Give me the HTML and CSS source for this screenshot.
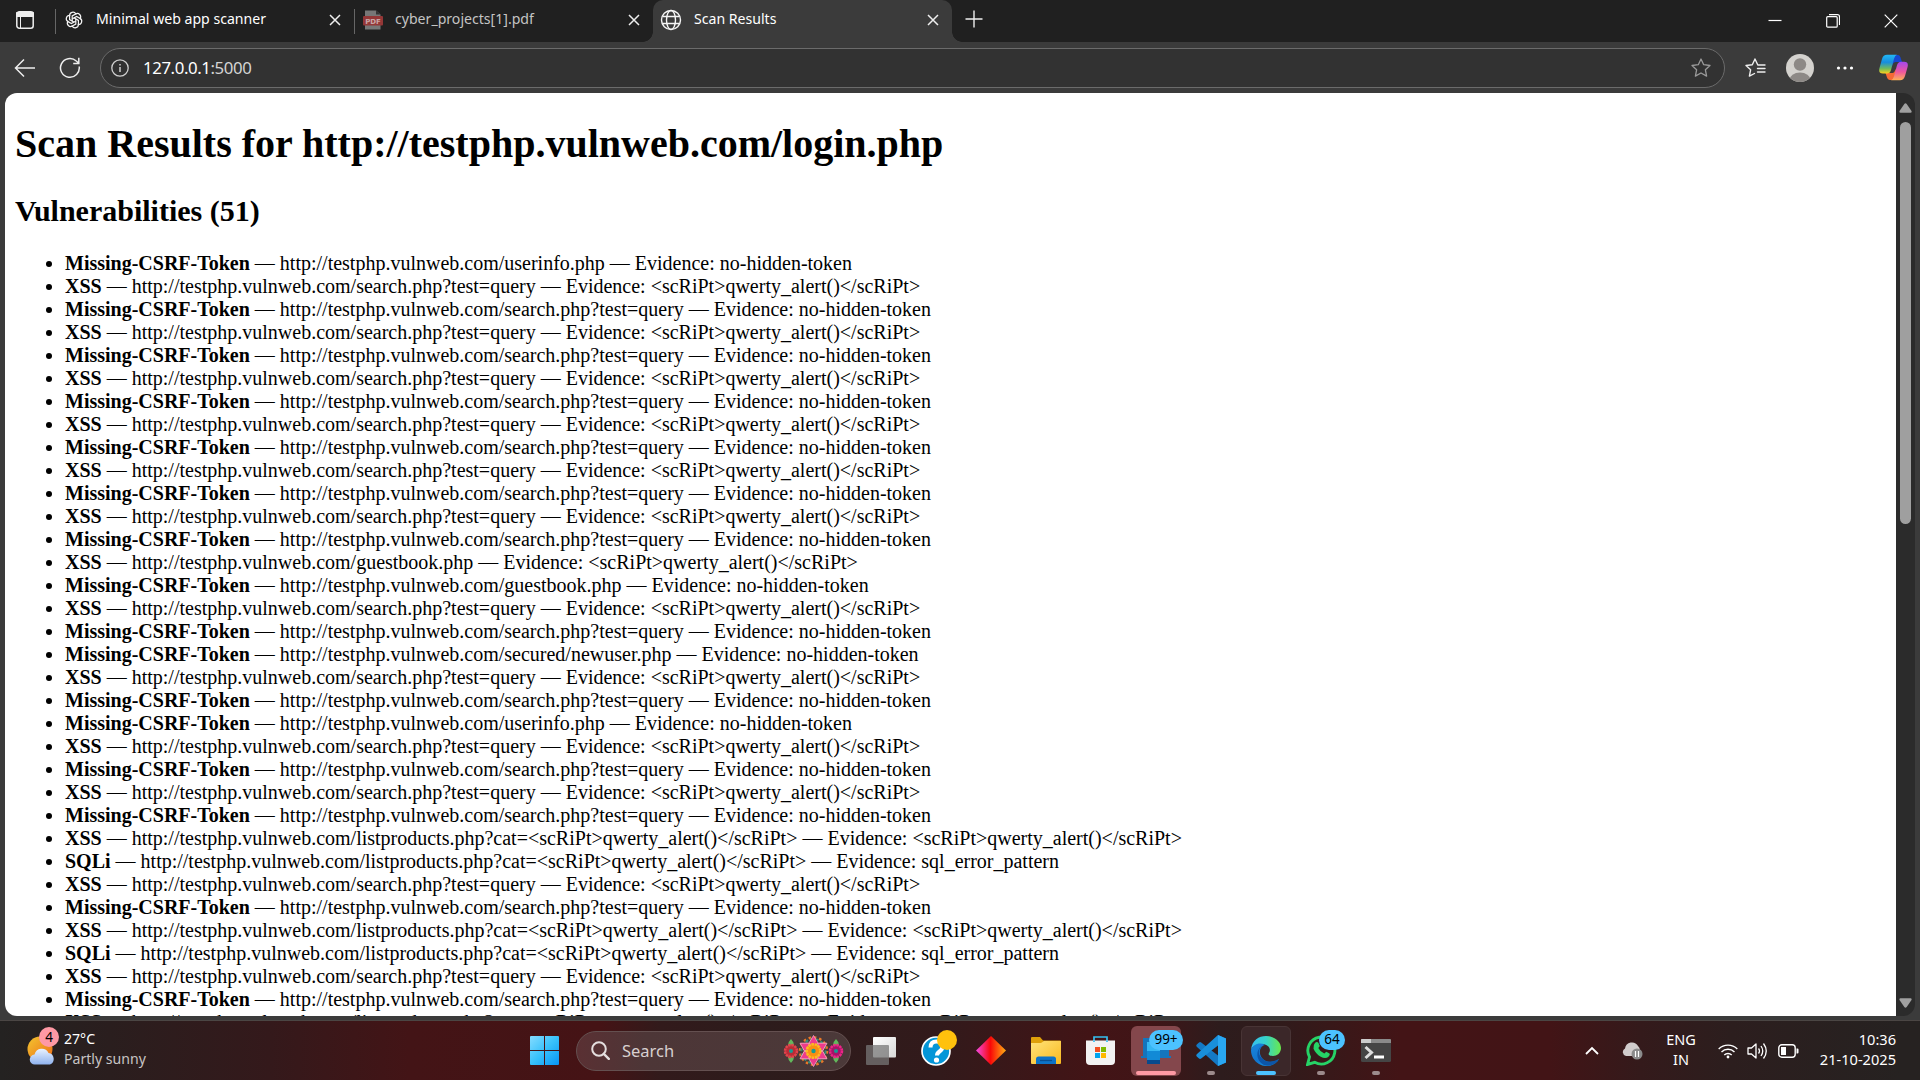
FILE: index.html
```html
<!DOCTYPE html>
<html lang="en">
<head>
<meta charset="utf-8">
<title>Scan Results</title>
<link rel="stylesheet" href="styles.css">
</head>
<body>
<div class="browser">
  <header class="tabstrip">
    <div class="tab-actions"><svg width="20" height="20" viewBox="0 0 20 20"><rect x="1.8" y="1.8" width="16.4" height="16.4" rx="2.5" fill="none" stroke="#eee" stroke-width="1.5"/><path d="M1.5 2.5h17v4h-17zM5.5 6v12" fill="#eee" stroke="#eee"/></svg></div>
    <div class="tab tab-chat">
      <svg class="favicon" width="18" height="18" viewBox="0 0 20 20" fill="none" stroke="#f3f3f3" stroke-width="1.35"><g id="knot"><path id="k" d="M8 11.4V5.5l3.8-2.2a3.7 3.7 0 0 1 5.1 5l-.4.7"/><use href="#k" transform="rotate(60 10 10)"/><use href="#k" transform="rotate(120 10 10)"/><use href="#k" transform="rotate(180 10 10)"/><use href="#k" transform="rotate(240 10 10)"/><use href="#k" transform="rotate(300 10 10)"/></g></svg>
      <span class="tab-title t1">Minimal web app scanner</span>
      <svg class="close" width="12" height="12" viewBox="0 0 12 12"><path d="M1 1l10 10M11 1L1 11"/></svg>
    </div>
    <div class="tab tab-pdf">
      <svg class="favicon" width="20" height="20" viewBox="0 0 20 20"><path d="M2 .5h11l4.500 4v15H2z" fill="#777"/><path d="M13 .5v4h4.500" fill="#333"/><rect y="6" width="20" height="9.500" rx="1" fill="#943737"/><text x="10" y="13.500" class="pdf-label">PDF</text></svg>
      <span class="tab-title t2">cyber_projects[1].pdf</span>
      <svg class="close" width="12" height="12" viewBox="0 0 12 12"><path d="M1 1l10 10M11 1L1 11"/></svg>
    </div>
    <div class="tab tab-active">
      <svg class="favicon" width="22" height="22" viewBox="0 0 22 22" fill="none" stroke="#f5f5f5" stroke-width="1.4"><circle cx="11" cy="11" r="9.500"/><ellipse cx="11" cy="11" rx="4.500" ry="9.500"/><path d="M2.500 7.500h17M2.500 14.500h17"/></svg>
      <span class="tab-title t3">Scan Results</span>
      <svg class="close" width="12" height="12" viewBox="0 0 12 12"><path d="M1 1l10 10M11 1L1 11"/></svg>
    </div>
    <svg class="new-tab" width="18" height="18" viewBox="0 0 18 18"><path d="M9 .5v17M.5 9h17" stroke="#eee" stroke-width="1.400"/></svg>
    <div class="window-controls">
      <svg width="14" height="14" viewBox="0 0 14 14"><path d="M.5 6.500h13"/></svg>
      <svg width="14" height="14" viewBox="0 0 14 14"><rect x=".7" y="2.700" width="10.500" height="10.500" rx="1"/><path d="M3 .7h8.500a2 2 0 0 1 2 2V11"/></svg>
      <svg width="14" height="14" viewBox="0 0 14 14"><path d="M.7.7l12.600 12.600M13.300.7L.7 13.300"/></svg>
    </div>
  </header>
  <nav class="toolbar">
    <svg class="back" width="22" height="22" viewBox="0 0 22 22"><path d="M10 2.500L1.500 11l8.500 8.500M1.500 11h19.500"/></svg>
    <svg class="reload" width="22" height="22" viewBox="0 0 22 22"><path d="M20.200 9.500A9.400 9.400 0 1 1 17.300 4L19.800 6.200M19.800.8v5.600h-5.600"/></svg>
    <div class="address">
      <svg width="18" height="18" viewBox="0 0 18 18" fill="none" stroke="#d0d0d0" stroke-width="1.300"><circle cx="9" cy="9" r="8.200"/><path d="M9 8v5M9 5v1.500" stroke-width="1.500"/></svg>
      <span class="url">127.0.0.1<span class="port">:5000</span></span>
      <svg class="fav" width="20" height="20" viewBox="0 0 20 20" fill="none" stroke="#9a9a9a" stroke-width="1.300" stroke-linejoin="round"><path d="M10 1l2.700 5.700 6.300.8-4.600 4.300 1.200 6.300L10 15l-5.600 3.100 1.200-6.300L1 7.500l6.300-.8z"/></svg>
    </div>
    <svg class="favorites" width="21" height="20" viewBox="0 0 21 20" fill="none" stroke="#eee" stroke-width="1.400" stroke-linejoin="round" stroke-linecap="round"><path d="M20 7h-7.200L10 1 7.300 6.700 1 7.500l4.600 4.300-1.200 6.300L9.500 15.500M12.500 10.500H20M12.500 14H20"/></svg>
    <svg class="avatar" width="28" height="28" viewBox="0 0 28 28"><clipPath id="av"><circle cx="14" cy="14" r="14"/></clipPath><g clip-path="url(#av)"><path fill="#d4d2ce" d="M0 0h28v28H0z"/><circle cx="14" cy="10.500" r="6.200" fill="#8d8986"/><ellipse cx="14" cy="26" rx="10.500" ry="7.500" fill="#8d8986"/></g></svg>
    <svg class="more" width="18" height="4" viewBox="0 0 18 4" fill="#fff"><circle cx="2.500" cy="2" r="1.600"/><circle cx="9" cy="2" r="1.600"/><circle cx="15.500" cy="2" r="1.600"/></svg>
    <svg class="copilot" width="29" height="27" viewBox="0 0 29 27">
      <defs><linearGradient id="c1" x2="0" y2="1"><stop stop-color="#22b8f5"/><stop offset=".4" stop-color="#178ddf"/><stop offset=".75" stop-color="#74bd58"/><stop offset="1" stop-color="#ffd11b"/></linearGradient><linearGradient id="c2" x2="0" y2="1"><stop stop-color="#a348ed"/><stop offset=".55" stop-color="#ee569e"/><stop offset="1" stop-color="#ffb157"/></linearGradient></defs>
      <path d="M14 1h5q2 0 3 4l1 3h-6q-3 0-4 4l-2-8z" fill="#1747cf"/><path d="M15 26h-4q-2.500 0-3.500-4l-1-3h7q2 0 3-4l2 8z" fill="#f66a35"/>
      <path d="M8 .8h10q-2 .5-3 4L12 16q-1 3.500-4 3.500H4Q-1 19.500.5 14L3 5Q4.200.8 8 .8z" fill="url(#c1)"/><path d="M21 26.200H12q2-.5 3-4l3-11q1-3.500 4-3.500h3q5 0 3.500 5.500L26 22q-1.200 4.200-5 4.200z" fill="url(#c2)"/>
    </svg>
  </nav>
  <div class="viewport">
    <main class="page">
      <h1>Scan Results for http://testphp.vulnweb.com/login.php</h1>
      <h2>Vulnerabilities (51)</h2>
      <ul>
        <li><b>Missing-CSRF-Token</b> — http://testphp.vulnweb.com/userinfo.php — Evidence: no-hidden-token</li>
        <li><b>XSS</b> — http://testphp.vulnweb.com/search.php?test=query — Evidence: &lt;scRiPt&gt;qwerty_alert()&lt;/scRiPt&gt;</li>
        <li><b>Missing-CSRF-Token</b> — http://testphp.vulnweb.com/search.php?test=query — Evidence: no-hidden-token</li>
        <li><b>XSS</b> — http://testphp.vulnweb.com/search.php?test=query — Evidence: &lt;scRiPt&gt;qwerty_alert()&lt;/scRiPt&gt;</li>
        <li><b>Missing-CSRF-Token</b> — http://testphp.vulnweb.com/search.php?test=query — Evidence: no-hidden-token</li>
        <li><b>XSS</b> — http://testphp.vulnweb.com/search.php?test=query — Evidence: &lt;scRiPt&gt;qwerty_alert()&lt;/scRiPt&gt;</li>
        <li><b>Missing-CSRF-Token</b> — http://testphp.vulnweb.com/search.php?test=query — Evidence: no-hidden-token</li>
        <li><b>XSS</b> — http://testphp.vulnweb.com/search.php?test=query — Evidence: &lt;scRiPt&gt;qwerty_alert()&lt;/scRiPt&gt;</li>
        <li><b>Missing-CSRF-Token</b> — http://testphp.vulnweb.com/search.php?test=query — Evidence: no-hidden-token</li>
        <li><b>XSS</b> — http://testphp.vulnweb.com/search.php?test=query — Evidence: &lt;scRiPt&gt;qwerty_alert()&lt;/scRiPt&gt;</li>
        <li><b>Missing-CSRF-Token</b> — http://testphp.vulnweb.com/search.php?test=query — Evidence: no-hidden-token</li>
        <li><b>XSS</b> — http://testphp.vulnweb.com/search.php?test=query — Evidence: &lt;scRiPt&gt;qwerty_alert()&lt;/scRiPt&gt;</li>
        <li><b>Missing-CSRF-Token</b> — http://testphp.vulnweb.com/search.php?test=query — Evidence: no-hidden-token</li>
        <li><b>XSS</b> — http://testphp.vulnweb.com/guestbook.php — Evidence: &lt;scRiPt&gt;qwerty_alert()&lt;/scRiPt&gt;</li>
        <li><b>Missing-CSRF-Token</b> — http://testphp.vulnweb.com/guestbook.php — Evidence: no-hidden-token</li>
        <li><b>XSS</b> — http://testphp.vulnweb.com/search.php?test=query — Evidence: &lt;scRiPt&gt;qwerty_alert()&lt;/scRiPt&gt;</li>
        <li><b>Missing-CSRF-Token</b> — http://testphp.vulnweb.com/search.php?test=query — Evidence: no-hidden-token</li>
        <li><b>Missing-CSRF-Token</b> — http://testphp.vulnweb.com/secured/newuser.php — Evidence: no-hidden-token</li>
        <li><b>XSS</b> — http://testphp.vulnweb.com/search.php?test=query — Evidence: &lt;scRiPt&gt;qwerty_alert()&lt;/scRiPt&gt;</li>
        <li><b>Missing-CSRF-Token</b> — http://testphp.vulnweb.com/search.php?test=query — Evidence: no-hidden-token</li>
        <li><b>Missing-CSRF-Token</b> — http://testphp.vulnweb.com/userinfo.php — Evidence: no-hidden-token</li>
        <li><b>XSS</b> — http://testphp.vulnweb.com/search.php?test=query — Evidence: &lt;scRiPt&gt;qwerty_alert()&lt;/scRiPt&gt;</li>
        <li><b>Missing-CSRF-Token</b> — http://testphp.vulnweb.com/search.php?test=query — Evidence: no-hidden-token</li>
        <li><b>XSS</b> — http://testphp.vulnweb.com/search.php?test=query — Evidence: &lt;scRiPt&gt;qwerty_alert()&lt;/scRiPt&gt;</li>
        <li><b>Missing-CSRF-Token</b> — http://testphp.vulnweb.com/search.php?test=query — Evidence: no-hidden-token</li>
        <li><b>XSS</b> — http://testphp.vulnweb.com/listproducts.php?cat=&lt;scRiPt&gt;qwerty_alert()&lt;/scRiPt&gt; — Evidence: &lt;scRiPt&gt;qwerty_alert()&lt;/scRiPt&gt;</li>
        <li><b>SQLi</b> — http://testphp.vulnweb.com/listproducts.php?cat=&lt;scRiPt&gt;qwerty_alert()&lt;/scRiPt&gt; — Evidence: sql_error_pattern</li>
        <li><b>XSS</b> — http://testphp.vulnweb.com/search.php?test=query — Evidence: &lt;scRiPt&gt;qwerty_alert()&lt;/scRiPt&gt;</li>
        <li><b>Missing-CSRF-Token</b> — http://testphp.vulnweb.com/search.php?test=query — Evidence: no-hidden-token</li>
        <li><b>XSS</b> — http://testphp.vulnweb.com/listproducts.php?cat=&lt;scRiPt&gt;qwerty_alert()&lt;/scRiPt&gt; — Evidence: &lt;scRiPt&gt;qwerty_alert()&lt;/scRiPt&gt;</li>
        <li><b>SQLi</b> — http://testphp.vulnweb.com/listproducts.php?cat=&lt;scRiPt&gt;qwerty_alert()&lt;/scRiPt&gt; — Evidence: sql_error_pattern</li>
        <li><b>XSS</b> — http://testphp.vulnweb.com/search.php?test=query — Evidence: &lt;scRiPt&gt;qwerty_alert()&lt;/scRiPt&gt;</li>
        <li><b>Missing-CSRF-Token</b> — http://testphp.vulnweb.com/search.php?test=query — Evidence: no-hidden-token</li>
        <li><b>XSS</b> — http://testphp.vulnweb.com/listproducts.php?cat=&lt;scRiPt&gt;qwerty_alert()&lt;/scRiPt&gt; — Evidence: &lt;scRiPt&gt;qwerty_alert()&lt;/scRiPt&gt;</li>
      </ul>
    </main>
    <div class="scrollbar">
      <svg width="13" height="10" viewBox="0 0 13 10"><path d="M5.300 1q1.200-1.500 2.400 0l4.800 7q.5 1.700-1 1.700H1.500Q0 9.700.5 8z" fill="#a0a0a0"/></svg>
      <div class="track"><div class="thumb"></div></div>
      <svg width="13" height="10" viewBox="0 0 13 10"><path d="M5.300 9q1.200 1.500 2.400 0l4.800-7q.5-1.700-1-1.700H1.500Q0 .3.500 2z" fill="#a0a0a0"/></svg>
    </div>
  </div>
</div>
<footer class="taskbar">
  <div class="weather">
    <div class="weather-icon">
      <svg width="29" height="29" viewBox="0 0 29 29"><defs><linearGradient id="sun" x2="1" y2="1"><stop stop-color="#f3c52f"/><stop offset="1" stop-color="#ed6b18"/></linearGradient><linearGradient id="cl" x2="0" y2="1"><stop stop-color="#e9f2ff"/><stop offset="1" stop-color="#8fb2ee"/></linearGradient></defs><circle cx="13" cy="13" r="12.500" fill="url(#sun)"/><path d="M8 28.500a5 5 0 0 1-.5-10 7.500 7.500 0 0 1 14-1.500 6 6 0 0 1 1.500 11.500z" fill="url(#cl)"/></svg>
      <span class="weather-badge">4</span>
    </div>
    <div class="weather-text"><span>27°C</span><span class="cond">Partly sunny</span></div>
  </div>
  <svg class="start" width="29" height="29" viewBox="0 0 29 29"><defs><linearGradient id="win" gradientUnits="userSpaceOnUse" x2="29" y2="29"><stop stop-color="#85dcff"/><stop offset=".5" stop-color="#38c1fb"/><stop offset="1" stop-color="#0795f5"/></linearGradient></defs><path d="M0 1q0-1 1-1h13v14H0zM15 0h13q1 0 1 1v13H15zM0 15h14v14H1q-1 0-1-1zM15 15h14v13q0 1-1 1H15z" fill="url(#win)"/></svg>
  <div class="search">
    <svg width="19" height="19" viewBox="0 0 19 19" fill="none" stroke="#e4dede" stroke-width="2"><circle cx="8" cy="8" r="6.800"/><path d="M12.800 12.800l5 5" stroke-width="2.400" stroke-linecap="round"/></svg>
    <span>Search</span>
    <svg class="flowers" width="61" height="32" viewBox="0 0 61 32">
      <g fill="#62b85c"><path d="M8 4q6 6 0 12-6-6 0-12zM8 16q6 6 0 12-6-6 0-12zM53 4q6 6 0 12-6-6 0-12zM53 16q6 6 0 12-6-6 0-12z"/></g>
      <circle cx="8" cy="16" r="6" fill="#b92c35" stroke="#e2424c" stroke-width="2.500" stroke-dasharray="2.400 .7"/><circle cx="53" cy="16" r="6" fill="#a61467" stroke="#ec2488" stroke-width="2.500" stroke-dasharray="2.400 .7"/>
      <circle cx="30.500" cy="16" r="13.500" fill="none" stroke="#ed7926" stroke-width="2.500" stroke-dasharray="2.500 2.800"/>
      <circle cx="30.500" cy="16" r="12" fill="none" stroke="#368b75" stroke-width="2" stroke-dasharray="3 2.300"/>
      <g id="petals"><path id="pp" d="M26 8l4.500-7.500L35 8l-4.500 4z" fill="#ee3b8c" stroke="#f6a7c5" stroke-width=".8"/><use href="#pp" transform="rotate(60 30.500 16)"/><use href="#pp" transform="rotate(120 30.500 16)"/><use href="#pp" transform="rotate(180 30.500 16)"/><use href="#pp" transform="rotate(240 30.500 16)"/><use href="#pp" transform="rotate(300 30.500 16)"/></g>
      <circle cx="30.500" cy="16" r="6.800" fill="#f98f13" stroke="#fdbb21" stroke-width="2.500" stroke-dasharray="2.600 .7"/>
      <g fill="#179a91"><circle cx="8" cy="16" r="2"/><circle cx="30.500" cy="16" r="2.200"/><circle cx="53" cy="16" r="2"/></g>
    </svg>
  </div>
  <div class="apps">
    <div class="app"><svg width="30" height="28" viewBox="0 0 30 28"><defs><linearGradient id="tv" x2="1" y2="1"><stop stop-color="#fff"/><stop offset="1" stop-color="#d8d8d8"/></linearGradient></defs><rect x="7" width="23" height="20.500" rx="1" fill="url(#tv)"/><rect y="8" width="23" height="20" rx="1" fill="#777" opacity=".75"/></svg></div>
    <div class="app"><svg width="30" height="30" viewBox="0 0 30 30"><circle cx="15" cy="15" r="14" fill="#0496d8" stroke="#fff" stroke-width="1.700"/><path d="M9.500 11.500q0-6 6-6t6 5q0 3-3 5-2.500 1.700-2.500 4" fill="none" stroke="#fff" stroke-width="4"/><circle cx="15.500" cy="24" r="2.600" fill="#fff"/></svg><i class="dot-badge"></i></div>
    <div class="app"><svg width="30" height="29" viewBox="0 0 30 29"><defs><linearGradient id="dia"><stop offset=".05" stop-color="#f443cf"/><stop offset=".48" stop-color="#f90808"/><stop offset="1" stop-color="#ffae12"/></linearGradient></defs><path d="M15 0l15 14.500L15 29 0 14.500z" fill="url(#dia)"/></svg></div>
    <div class="app"><svg width="30" height="27" viewBox="0 0 30 27"><defs><linearGradient id="fo" x2="1" y2="1"><stop stop-color="#ffe37b"/><stop offset="1" stop-color="#f9b91e"/></linearGradient></defs><path d="M0 1q0-1 1-1h8l3 3.500h17q1 0 1 1V14H0z" fill="#dfa00a"/><path d="M0 6h10l3-2h17v22q0 1-1 1H1q-1 0-1-1z" fill="url(#fo)"/><path d="M5 27v-5q0-2.500 2.500-2.500h15Q25 19.500 25 22v5z" fill="#0d73c8"/><path d="M9 23.500h12" stroke="#084f93" stroke-width="1.300"/></svg></div>
    <div class="app store"><svg width="29" height="29" viewBox="0 0 29 29"><path d="M8 6V1h13v5" fill="none" stroke="#35bff0" stroke-width="1.700"/><path d="M0 4.500h29V25q0 4-4 4H4q-4 0-4-4z" fill="#f2f2f2"/><path d="M8 6V4.500M21 6V4.500" stroke="#35bff0" stroke-width="1.700"/><path d="M9 11h5v5H9z" fill="#f25022"/><path d="M15 11h5v5h-5z" fill="#7fba00"/><path d="M9 17h5v5H9z" fill="#00a4ef"/><path d="M15 17h5v5h-5z" fill="#ffb900"/></svg></div>
    <div class="app alert"><svg width="30" height="26" viewBox="0 0 30 26"><path d="M2 0h26v18h2v2H0v-2h2z" fill="#1475bd"/><path d="M6 4h13v22H6z" fill="#128ad6"/><path d="M6 4h13v9H6z" fill="#35b7f2"/><path d="M6 22h13v4H6z" fill="#084a8d"/></svg><span class="badge wide">99+</span><i class="run run-alert"></i></div>
    <div class="app"><svg width="30" height="31" viewBox="0 0 30 31"><path d="M22 0l8 3.500v24L22 31 1 12Q-.5 10.500 1 9.200L3 7.500q1-.8 2.200 0L22 20.500z" fill="#1479c5"/><path d="M22 0L1 19q-1.500 1.300 0 2.700l2 1.800q1 .8 2.200 0L22 10.500z" fill="#198fdb"/><path d="M22 0l8 3.500v24L22 31z" fill="#29a7f2"/></svg><i class="run"></i></div>
    <div class="app current"><svg width="30" height="30" viewBox="0 0 30 30"><defs><linearGradient id="e1"><stop stop-color="#36bdf2"/><stop offset=".5" stop-color="#36d2c9"/><stop offset="1" stop-color="#69e84b"/></linearGradient><linearGradient id="e2" x2=".7" y2="1"><stop stop-color="#1a85dc"/><stop offset=".6" stop-color="#1175ce"/><stop offset="1" stop-color="#1591df"/></linearGradient></defs><path d="M0 14C1 4 8 0 15 0c9 0 15 6 15 12 0 5-4 8-8 8-4 0-5-1.500-4-3 3-5-2-9-7-9C5 8 1 11 0 14z" fill="url(#e1)"/><path d="M0 14C2 8 9 6 14 9c-5 1-7 8-3 13 4 5 11 5 17 1-4 7-13 9-20 5-5-3-8-8-8-14z" fill="url(#e2)"/><path d="M14 9c-8 2-8 11-1 15 5 3 11 1 15-1-3 6-10 8-15 6C4 25 4 11 14 9z" fill="#0c55a8"/></svg><i class="run run-current"></i></div>
    <div class="app"><svg width="31" height="31" viewBox="0 0 31 31"><path d="M1.500 29.500l2-7.500a13.500 13.500 0 1 1 5.200 5.300z" fill="none" stroke="#26d366" stroke-width="2.900"/><path d="M9 8q2-2 3.500 0l1.300 3-1.500 2q2 4 6 5.500l2-1.800 3.200 1.800q1 1-.8 3-3 3-8 .3-5-3-7.200-8Q7 10 9 8z" fill="#26d366"/></svg><span class="badge">64</span><i class="run"></i></div>
    <div class="app"><svg class="term" width="30" height="23" viewBox="0 0 30 23"><rect width="30" height="23" rx="1.500" fill="#454545"/><path d="M0 4V1q0-1 1-1h28q1 0 1 1v3z" fill="#8a8a8a"/><path d="M0 4V1q0-1 1-1h9v4z" fill="#ccc"/><path d="M4.500 8l6 5.500-6 5.500" fill="none" stroke="#ddd" stroke-width="3"/><path d="M13 16.500h10v3H13z" fill="#fff"/></svg><i class="run"></i></div>
  </div>
  <div class="tray">
    <svg class="chev" width="14" height="9" viewBox="0 0 14 9"><path d="M1 8l6-6 6 6" fill="none" stroke="#fff" stroke-width="1.800"/></svg>
    <svg class="cloud" width="21" height="18" viewBox="0 0 21 18"><path d="M4 14a4 4 0 0 1-1-7.500A7 7 0 0 1 16 4q2 1.500 2 5l-7 5z" fill="#d1cccc"/><circle cx="15" cy="12" r="5.500" fill="#8b8b8b"/><path d="M13.500 9v6M16.500 9v6" stroke="#fff" stroke-width="1.200"/></svg>
    <div class="lang"><span>ENG</span><span>IN</span></div>
    <svg class="wifi" width="20" height="16" viewBox="0 0 20 16" fill="none" stroke="#fff" stroke-width="1.400"><path d="M.7 6a13 13 0 0 1 18.600 0M3.500 9a9.200 9.200 0 0 1 13 0M6.300 12a5.300 5.300 0 0 1 7.400 0"/><circle cx="10" cy="14" r="1.400" fill="#fff" stroke="none"/></svg>
    <svg class="sound" width="21" height="18" viewBox="0 0 21 18" fill="none" stroke="#fff" stroke-width="1.300" stroke-linejoin="round"><path d="M1 6h3.500L9 2v14l-4.500-4H1zM11.500 6.500q2 2.500 0 5M14 4q3.500 5 0 10M16.500 1.500q5.500 7.500 0 15"/></svg>
    <svg class="battery" width="21" height="14" viewBox="0 0 21 14"><rect x=".8" y=".8" width="16.400" height="12.400" rx="3" fill="none" stroke="#fff" stroke-width="1.400"/><path d="M3 3h5v8H3zM18.500 4.500h1q1 0 1 1v3q0 1-1 1h-1z" fill="#fff"/></svg>
    <div class="clock"><span>10:36</span><span>21-10-2025</span></div>
  </div>
</footer>
</body>
</html>
```
FILE: styles.css
```css
* { box-sizing: border-box; }
body { margin: 0; width: 1920px; height: 1080px; overflow: hidden; display: flex; flex-direction: column; background: #3b3b3b; font-family: "Noto Sans", sans-serif; color: #fff; }
svg { display: block; flex: none; }
.browser { height: 1021px; display: flex; flex-direction: column; background: #3b3b3b; border-bottom: 1px solid #4b4644; }

.tabstrip { height: 42px; flex: none; display: flex; align-items: stretch; background: #202020; }
.tab-actions { width: 55px; padding: 10px 0 0 15px; }
.tab { display: flex; align-items: center; position: relative; padding-bottom: 2px; }
.tab-chat { width: 299px; padding-left: 10px; padding-right: 13px; }
.tab-pdf { width: 299px; padding-left: 9px; padding-right: 13px; }
.tab-chat::before, .tab-pdf::before { content: ""; position: absolute; left: 0; top: 9px; width: 1px; height: 25px; background: #666; }
.tab-active { width: 299px; padding-left: 7px; padding-right: 13px; background: #3b3b3b; border-radius: 10px 10px 0 0; }
.tab-active::before, .tab-active::after { content: ""; position: absolute; bottom: 0; width: 10px; height: 10px; }
.tab-active::before { left: -10px; background: radial-gradient(circle at 0 0, transparent 9.5px, #3b3b3b 10px); }
.tab-active::after { right: -10px; background: radial-gradient(circle at 100% 0, transparent 9.5px, #3b3b3b 10px); }
.tab-title { font-size: 14.1px; line-height: 20px; padding-bottom: 2px; white-space: nowrap; margin-right: auto; }
.t1 { margin-left: 13px; }
.t2 { margin-left: 12px; color: #c4c4c4; }
.t3 { margin-left: 12px; }
.pdf-label { font: bold 7px "DejaVu Sans", sans-serif; fill: #c9a7a7; text-anchor: middle; }
.close path { stroke: #eee; stroke-width: 1.5; }
.new-tab { margin: 10px 0 0 13px; }
.window-controls { margin-left: auto; margin-right: 22px; padding-top: 14px; display: flex; gap: 44px; fill: none; stroke: #fff; stroke-width: 1.2; }

.toolbar { height: 51px; flex: none; display: flex; align-items: center; }
.back, .reload { fill: none; stroke: #eee; stroke-width: 1.5; }
.back { margin-left: 14px; }
.reload { margin-left: 23px; }
.address { width: 1625px; height: 40px; margin-left: 19px; padding: 0 13px 0 10px; display: flex; align-items: center; border: 1px solid #6b6b6b; border-radius: 20px; background: #323232; }
.url { margin-left: 14px; font-size: 16.8px; letter-spacing: -.4px; }
.port { color: #d4d4d4; }
.fav { margin-left: auto; }
.favorites { margin-left: 20px; }
.avatar { margin-left: 20px; }
.more { margin-left: 22px; }
.copilot { margin-left: 25px; }

.viewport { height: 923px; margin: 0 5px; display: flex; border-radius: 12px; overflow: hidden; }
.page { flex: 1; overflow: hidden; padding: 1px 10px 0; background: #fff; color: #000; font: 20px "Liberation Serif", serif; }
.page h1 { margin: 26.8px 0; font-size: 40px; line-height: 46px; }
.page h2 { margin: 24.9px 0; font-size: 30px; line-height: 34px; }
.page ul { margin: 0; padding-left: 50px; }
.page li { line-height: 23px; white-space: nowrap; }
.scrollbar { width: 19px; padding: 10px 0 8px; display: flex; flex-direction: column; align-items: center; background: #2b2b2b; }
.track { flex: 1; padding-top: 9px; }
.thumb { width: 11px; height: 402px; border-radius: 6px; background: #9f9f9f; }

.taskbar { height: 59px; display: flex; align-items: center; background: linear-gradient(90deg, #242221 0, #2a1e1e 110px, #34191b 270px, #431416 410px, #451315 600px, #321a1b 660px, #2d1c1c 760px, #321a1b 940px, #421416 1090px, #401517 1150px, #2d1c1d 1220px, #301b1b 1280px, #431416 1400px, #421416 1550px, #341a1b 1640px, #2c1e1e 1730px, #262221 1900px); font-size: 15px; }
.weather { width: 503px; padding-left: 27px; display: flex; align-items: center; gap: 8px; }
.weather-icon { position: relative; }
.weather-badge { position: absolute; left: 12px; top: -9px; width: 20px; height: 20px; border-radius: 50%; background: #ff99a4; color: #000; font-size: 13.5px; line-height: 20px; text-align: center; }
.weather-text { display: flex; flex-direction: column; line-height: 20px; padding-bottom: 4px; font-size: 14.1px; }
.cond { color: #c8c4c4; }
.start { margin-left: 27px; }
.search { width: 275px; height: 40px; margin-left: 17px; padding: 0 6px 0 14px; display: flex; align-items: center; border: 1px solid #645050; border-radius: 20px; background: linear-gradient(90deg, #5a3033, #4d3637 25%, #4b3939); }
.search span { margin-left: 12px; font-size: 16.5px; color: #d8d0d0; }
.flowers { margin-left: auto; }
.apps { margin-left: 5px; display: flex; gap: 5px; }
.app { position: relative; width: 50px; height: 50px; display: grid; place-items: center; border-radius: 6px; }
.store { padding-right: 1px; }
.alert { background: #84474c; }
.current { background: #3b2729; border: 1px solid #483435; }
.term { margin-top: -1px; }
.dot-badge { position: absolute; left: 26px; top: 4px; width: 20px; height: 20px; border-radius: 50%; background: #ffc10d; }
.badge { position: absolute; right: 1px; top: 4px; width: 26px; height: 20px; border-radius: 10px; background: #4cc2ff; color: #000; font-size: 13.500px; line-height: 19px; text-align: center; }
.wide { right: -2px; width: 34px; }
.run { position: absolute; bottom: 1px; left: 50%; width: 8px; height: 4px; border-radius: 2px; background: #9c8b8c; transform: translateX(-50%); }
.run-alert { width: 40px; background: #ff99a4; }
.run-current { width: 20px; background: #4cc2ff; bottom: 0; }
.tray { margin-left: auto; padding-right: 24px; display: flex; align-items: center; }
.cloud { margin-left: 23px; }
.lang { width: 30px; margin-left: 23px; padding-bottom: 3px; display: flex; flex-direction: column; align-items: center; line-height: 20px; font-size: 14.5px; }
.wifi { margin-left: 22px; }
.sound { margin-left: 9px; }
.battery { margin-left: 10px; }
.clock { width: 78px; margin-left: 19px; padding-bottom: 4px; display: flex; flex-direction: column; align-items: flex-end; line-height: 20px; font-size: 14.6px; white-space: nowrap; }
```
